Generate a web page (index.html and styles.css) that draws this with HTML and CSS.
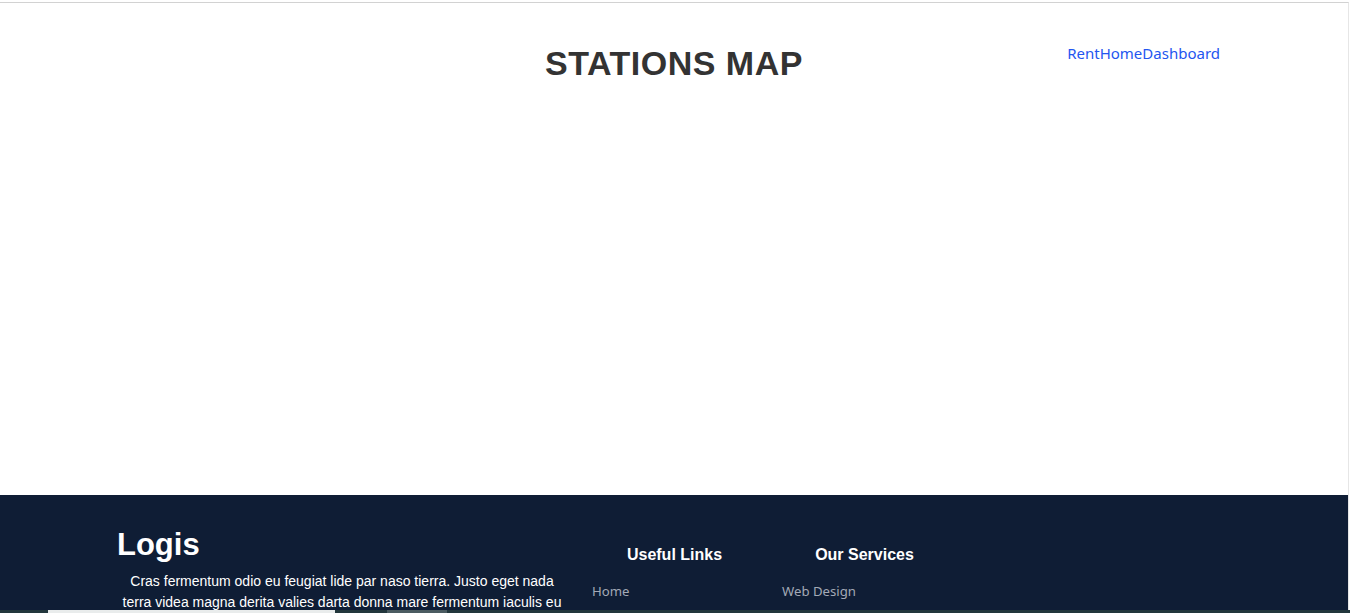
FILE: index.html
```html
<!DOCTYPE html>
<html lang="en">
<head>
<meta charset="utf-8">
<title>Stations Map</title>
<link rel="stylesheet" href="styles.css">
</head>
<body>
<div class="frame">
  <header class="top">
    <div class="top-side"></div>
    <h1 class="title">STATIONS MAP</h1>
    <nav class="nav">
      <a href="#" class="nav-link">Rent</a><a href="#" class="nav-link">Home</a><a href="#" class="nav-link">Dashboard</a>
    </nav>
  </header>
  <main class="map"></main>
  <footer class="footer">
    <div class="footer-inner">
      <div class="col-about">
        <h2 class="brand">Logis</h2>
        <p class="about-text">Cras fermentum odio eu feugiat lide par naso tierra. Justo eget nada terra videa magna derita valies darta donna mare fermentum iaculis eu non diam phasellus.</p>
      </div>
      <div class="col-links">
        <h4 class="col-title">Useful Links</h4>
        <ul class="link-list">
          <li><a href="#" class="foot-link">Home</a></li>
          <li><a href="#" class="foot-link">About us</a></li>
        </ul>
      </div>
      <div class="col-links">
        <h4 class="col-title">Our Services</h4>
        <ul class="link-list">
          <li><a href="#" class="foot-link">Web Design</a></li>
          <li><a href="#" class="foot-link">Web Development</a></li>
        </ul>
      </div>
    </div>
  </footer>
</div>
<div class="bottom-strip">
  <span class="strip-gap-a"></span><span class="strip-light"></span><span class="strip-gap-b"></span><span class="strip-grey"></span>
</div>
</body>
</html>
```

FILE: styles.css
```css
html, body {
  margin: 0;
  padding: 0;
  background: #ffffff;
  overflow: hidden;
  height: 613px;
}

.frame {
  margin-top: 2px;
  width: 1348px;
  border-top: 1px solid #d2d2d2;
  border-right: 1px solid #e6e6e6;
}

.top {
  display: grid;
  grid-template-columns: 1fr auto 1fr;
  align-items: start;
  padding-top: 40px;
}

.title {
  margin: 0;
  font-family: "Liberation Sans", Arial, sans-serif;
  font-weight: 700;
  font-size: 34px;
  line-height: 40px;
  color: #333333;
  letter-spacing: 0.5px;
}

.nav {
  justify-self: end;
  padding-right: 128px;
  margin-top: 0;
  display: flex;
  font-family: "Noto Sans", "Open Sans", sans-serif;
  font-size: 15px;
  line-height: 20px;
}

.nav-link {
  color: #2356f0;
  text-decoration: none;
}

.map {
  height: 412px;
}

.footer {
  background: #0f1d35;
  height: 140px;
  overflow: hidden;
}

.footer-inner {
  display: flex;
  padding-left: 117px;
  padding-top: 32px;
  gap: 25px;
}

.col-about {
  width: 450px;
}

.brand {
  margin: 0;
  font-family: "Liberation Sans", Arial, sans-serif;
  font-weight: 700;
  font-size: 31px;
  line-height: 36px;
  color: #ffffff;
}

.about-text {
  margin: 8px 0 0;
  font-family: "Liberation Sans", Arial, sans-serif;
  font-size: 14px;
  line-height: 21px;
  color: #ffffff;
  text-align: center;
}

.col-links {
  width: 165px;
  padding-top: 18px;
}

.col-title {
  margin: 0;
  text-align: center;
  font-family: "Liberation Sans", Arial, sans-serif;
  font-weight: 700;
  font-size: 16px;
  line-height: 20px;
  color: #ffffff;
}

.link-list {
  list-style: none;
  margin: 16px 0 0;
  padding: 0;
}

.link-list li {
  line-height: 20px;
  margin-bottom: 10px;
}

.foot-link {
  font-family: "Noto Sans", "Open Sans", sans-serif;
  font-size: 13.2px;
  color: #a3a9b6;
  text-decoration: none;
}

.bottom-strip {
  position: fixed;
  left: 0;
  right: 0;
  bottom: 0;
  height: 3px;
  display: flex;
  background: #22373c;
}

.strip-gap-a { width: 48px; }
.strip-light { width: 287px; background: #e9ecec; }
.strip-gap-b { width: 52px; }
.strip-grey { width: 60px; background: #4b5c61; }
```
